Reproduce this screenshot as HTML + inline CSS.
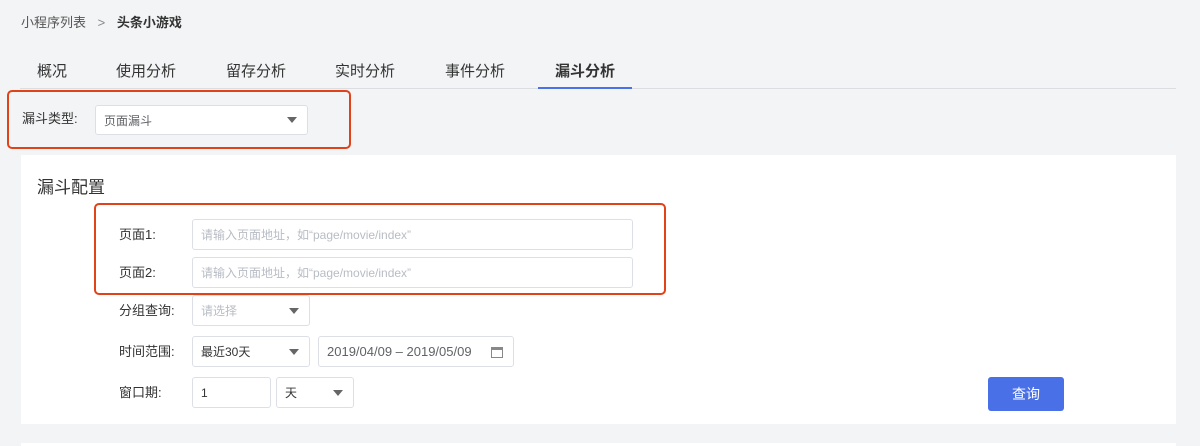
<!DOCTYPE html>
<html><head><meta charset="utf-8"><style>
*{margin:0;padding:0;box-sizing:border-box}
body{width:1200px;height:446px;background:#f3f4f6;font-family:"Liberation Sans","Noto Sans CJK SC",sans-serif;position:relative;overflow:hidden;color:#333}
.a{position:absolute}
.t{font-size:15px;color:#333;top:60px}
.inp{position:absolute;background:#fff;border:1px solid #dcdfe6;border-radius:3px;font-size:12px;color:#606266;padding-left:8px;display:flex;align-items:center}
.ph{color:#b8bcc4}
.arr{position:absolute;right:10px;top:50%;margin-top:-3px;width:0;height:0;border-left:5px solid transparent;border-right:5px solid transparent;border-top:6px solid #666}
.lbl{position:absolute;font-size:13px;color:#333}
.red{position:absolute;border:2px solid #e0421a;border-radius:5px}
</style></head><body>
<div class="a" style="left:21px;top:12px;font-size:13px;color:#555">小程序列表 <span style="color:#888;margin:0 8px">&gt;</span> <b style="color:#333">头条小游戏</b></div>
<div class="a t" style="left:37px">概况</div>
<div class="a t" style="left:116px">使用分析</div>
<div class="a t" style="left:226px">留存分析</div>
<div class="a t" style="left:335px">实时分析</div>
<div class="a t" style="left:445px">事件分析</div>
<div class="a t" style="left:555px;font-weight:bold">漏斗分析</div>
<div class="a" style="left:20px;top:88px;width:1156px;height:1px;background:#dcdde0"></div>
<div class="a" style="left:538px;top:87px;width:94px;height:2px;background:#4a72e8"></div>
<div class="lbl" style="left:22px;top:108px">漏斗类型:</div>
<div class="inp" style="left:95px;top:105px;width:213px;height:30px">页面漏斗<span class="arr"></span></div>
<div class="red" style="left:7px;top:90px;width:344px;height:59px"></div>
<div class="a" style="left:21px;top:155px;width:1155px;height:269px;background:#fff"></div>
<div class="a" style="left:37px;top:173px;font-size:17px;color:#333">漏斗配置</div>
<div class="lbl" style="left:119px;top:224px">页面1:</div>
<div class="inp" style="left:192px;top:219px;width:441px;height:31px"><span class="ph">请输入页面地址，如“page/movie/index”</span></div>
<div class="lbl" style="left:119px;top:262px">页面2:</div>
<div class="inp" style="left:192px;top:257px;width:441px;height:31px"><span class="ph">请输入页面地址，如“page/movie/index”</span></div>
<div class="red" style="left:94px;top:203px;width:572px;height:92px"></div>
<div class="lbl" style="left:119px;top:300px">分组查询:</div>
<div class="inp" style="left:192px;top:295px;width:118px;height:31px"><span class="ph">请选择</span><span class="arr"></span></div>
<div class="lbl" style="left:119px;top:341px">时间范围:</div>
<div class="inp" style="left:192px;top:336px;width:118px;height:31px;color:#333">最近30天<span class="arr"></span></div>
<div class="inp" style="left:318px;top:336px;width:196px;height:31px;font-size:13px">2019/04/09 – 2019/05/09
<svg class="a" style="right:10px;top:9px" width="12" height="12" viewBox="0 0 12 12"><rect x="0.5" y="1.5" width="11" height="10" fill="none" stroke="#888"/><rect x="0.5" y="1.5" width="11" height="2.5" fill="#888"/></svg></div>
<div class="lbl" style="left:119px;top:382px">窗口期:</div>
<div class="inp" style="left:192px;top:377px;width:79px;height:31px;color:#333">1</div>
<div class="inp" style="left:276px;top:377px;width:78px;height:31px;color:#333">天<span class="arr"></span></div>
<div class="a" style="left:988px;top:377px;width:76px;height:34px;background:#4a70e8;border-radius:3px;color:#fff;font-size:14px;text-align:center;line-height:34px">查询</div>
<div class="a" style="left:21px;top:443px;width:1155px;height:3px;background:#fff"></div>
</body></html>
